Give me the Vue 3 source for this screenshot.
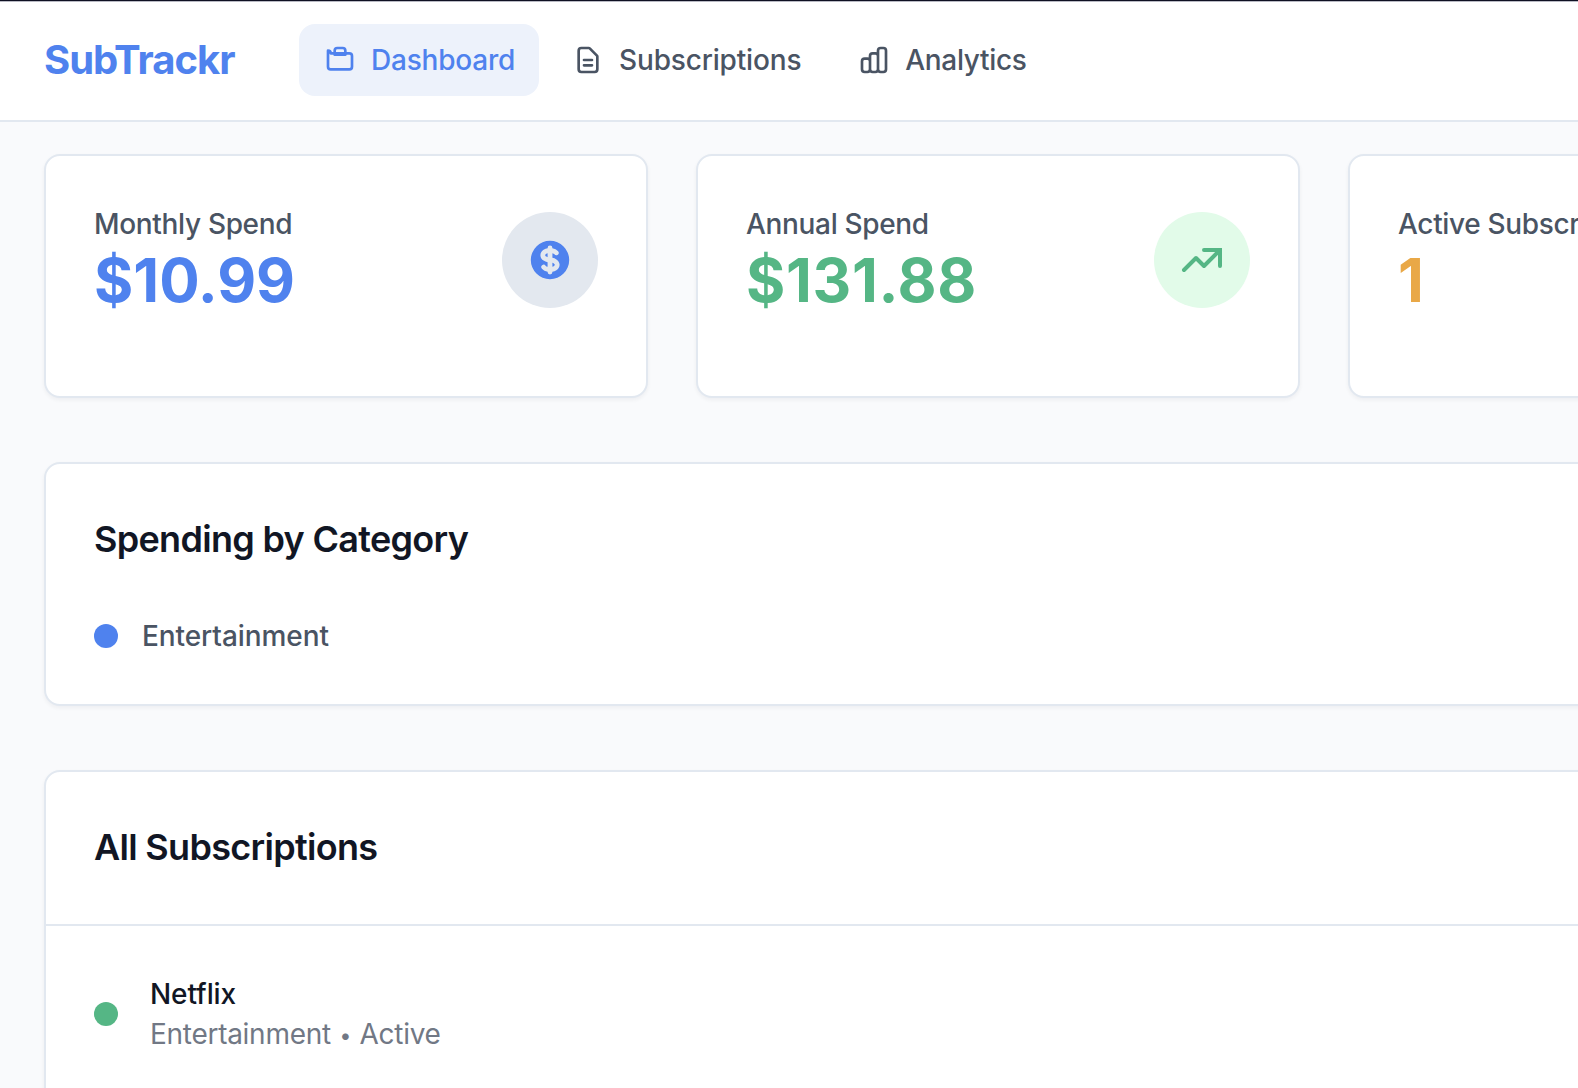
<script setup>
const nav = [
  {
    label: 'Dashboard',
    active: true,
    paths: [
      'M3 7v10a2 2 0 002 2h14a2 2 0 002-2V9a2 2 0 00-2-2H5a2 2 0 00-2-2z',
      'M8 5a2 2 0 012-2h4a2 2 0 012 2v3H8V5z',
    ],
  },
  {
    label: 'Subscriptions',
    paths: [
      'M9 12h6m-6 4h6m2 5H7a2 2 0 01-2-2V5a2 2 0 012-2h5.586a1 1 0 01.707.293l5.414 5.414a1 1 0 01.293.707V19a2 2 0 01-2 2z',
    ],
  },
  {
    label: 'Analytics',
    paths: [
      'M9 19v-6a2 2 0 00-2-2H5a2 2 0 00-2 2v6a2 2 0 002 2h2a2 2 0 002-2zm0 0V9a2 2 0 012-2h2a2 2 0 012 2v10m-6 0a2 2 0 002 2h2a2 2 0 002-2m0 0V5a2 2 0 012-2h2a2 2 0 012 2v14a2 2 0 01-2 2h-2a2 2 0 01-2-2z',
    ],
  },
]

const stats = [
  { label: 'Monthly Spend', value: '$10.99', tone: 'blue', icon: 'dollar' },
  { label: 'Annual Spend', value: '$131.88', tone: 'green', icon: 'trend' },
  { label: 'Active Subscriptions', value: '1', tone: 'amber' },
]
</script>

<template>
  <div class="page">
    <header class="header">
      <div class="brand">SubTrackr</div>
      <nav class="nav">
        <a v-for="item in nav" :key="item.label" class="nav-item" :class="[item.label.toLowerCase(), { active: item.active }]">
          <svg class="nav-icon" viewBox="0 0 24 24" fill="none" stroke="currentColor" stroke-width="2" stroke-linecap="round" stroke-linejoin="round">
            <path v-for="d in item.paths" :key="d" :d="d" />
          </svg>
          <span class="nav-label">{{ item.label }}</span>
        </a>
      </nav>
    </header>

    <main class="main">
      <section class="stats">
        <article v-for="s in stats" :key="s.label" class="card stat" :class="s.tone">
          <div class="stat-text">
            <div class="stat-label">{{ s.label }}</div>
            <div class="stat-value">{{ s.value }}</div>
          </div>
          <div v-if="s.icon" class="badge">
            <svg v-if="s.icon === 'dollar'" viewBox="0 0 20 20" fill="currentColor">
              <path d="M8.433 7.418c.155-.103.346-.196.567-.267v1.698a2.305 2.305 0 01-.567-.267C8.07 8.34 8 8.114 8 8c0-.114.07-.34.433-.582zM11 12.849v-1.698c.22.071.412.164.567.267.364.243.433.468.433.582 0 .114-.07.34-.433.582a2.305 2.305 0 01-.567.267z" />
              <path fill-rule="evenodd" clip-rule="evenodd" d="M10 18a8 8 0 100-16 8 8 0 000 16zm1-13a1 1 0 10-2 0v.092a4.535 4.535 0 00-1.676.662C6.602 6.234 6 7.009 6 8c0 .99.602 1.765 1.324 2.246.48.32 1.054.545 1.676.662v1.941c-.391-.127-.68-.317-.843-.504a1 1 0 10-1.51 1.31c.562.649 1.413 1.076 2.353 1.253V15a1 1 0 102 0v-.092a4.535 4.535 0 001.676-.662C13.398 13.766 14 12.991 14 12c0-.99-.602-1.765-1.324-2.246A4.535 4.535 0 0011 9.092V7.151c.391.127.68.317.843.504a1 1 0 101.511-1.31c-.563-.649-1.413-1.076-2.354-1.253V5z" />
            </svg>
            <svg v-else viewBox="0 0 24 24" fill="none" stroke="currentColor" stroke-width="2" stroke-linecap="round">
              <path d="M13 7h8v8" stroke-linejoin="miter" />
              <path d="M21 7l-8 8-4-4-6 6" stroke-linejoin="round" />
            </svg>
          </div>
        </article>
      </section>

      <section class="card category">
        <h2 class="title">Spending by Category</h2>
        <div class="category-row">
          <span class="dot blue-dot"></span>
          <span class="category-name">Entertainment</span>
        </div>
      </section>

      <section class="card list">
        <div class="list-head"><h2 class="title">All Subscriptions</h2></div>
        <div class="list-row">
          <span class="dot green-dot"></span>
          <div>
            <div class="sub-name">Netflix</div>
            <div class="sub-meta">Entertainment <span class="bullet">•</span> Active</div>
          </div>
        </div>
      </section>
    </main>
  </div>
</template>

<style>
body {
  margin: 0;
  overflow: hidden;
}
</style>

<style scoped>
.page {
  box-sizing: border-box;
  width: 1578px;
  height: 1088px;
  overflow: hidden;
  background: #f9fafc;
  font-family: Inter, 'Liberation Sans', sans-serif;
  font-size: 28px;
  line-height: 40px;
  font-weight: 500;
  color: #4a5463;
  white-space: nowrap;
}
.header {
  box-sizing: border-box;
  height: 122px;
  padding: 0 44px 2px;
  display: flex;
  align-items: center;
  border-top: 1px solid #0f1023;
  border-bottom: 2px solid #e2e8f0;
  background: #fff;
  box-shadow: inset 0 1px 0 #b9bac4;
}
.brand {
  width: 191px;
  margin-right: 64px;
  font-size: 40px;
  line-height: 56px;
  font-weight: 700;
  letter-spacing: -1.02px;
  color: #4f82ee;
}
.nav {
  display: flex;
  gap: 8px;
}
.nav-item {
  height: 72px;
  padding: 0 24px 0 25px;
  display: flex;
  align-items: center;
  gap: 15px;
  border-radius: 16px;
  letter-spacing: -0.22px;
}
.nav-item.subscriptions {
  letter-spacing: -0.17px;
}
.nav-item.analytics {
  letter-spacing: -0.34px;
}
.nav-item.active {
  background: #edf2fb;
  color: #4f82ee;
}
.nav-icon {
  width: 32px;
  height: 32px;
}
.card {
  box-sizing: border-box;
  border: 2px solid #e2e8f0;
  border-radius: 16px;
  background: #fff;
  box-shadow: 0 2px 4px rgba(15, 23, 42, 0.05);
}
.main {
  padding: 32px 0 0 44px;
  display: flex;
  flex-direction: column;
  gap: 64px;
}
.stats {
  display: grid;
  grid-template-columns: repeat(3, 604px);
  gap: 48px;
}
.stat {
  height: 244px;
  padding: 48px;
  display: flex;
  justify-content: space-between;
}
.stat-label {
  letter-spacing: -0.33px;
}
.stat-value {
  font-size: 60px;
  line-height: 72px;
  font-weight: 700;
}
.green .stat-value {
  letter-spacing: 0.7px;
}
.blue .stat-value,
.blue .badge {
  color: #4f82ee;
}
.green .stat-value,
.green .badge {
  color: #55b685;
}
.amber .stat-value {
  color: #e9a847;
}
.badge {
  width: 96px;
  height: 96px;
  margin-top: 8px;
  display: flex;
  align-items: center;
  justify-content: center;
  border-radius: 50%;
  background: #e3e8ef;
}
.green .badge {
  background: #e2fbe9;
}
.badge svg {
  width: 48px;
  height: 48px;
}
.category {
  width: 1900px;
  height: 244px;
  padding: 48px;
}
.title {
  margin: 0;
  padding-bottom: 2px;
  font-size: 36px;
  line-height: 54px;
  font-weight: 600;
  letter-spacing: -0.69px;
  color: #111624;
}
.category-row {
  margin-top: 48px;
  display: flex;
  align-items: center;
  gap: 24px;
}
.category-name {
  letter-spacing: -0.08px;
}
.dot {
  width: 24px;
  height: 24px;
  flex: none;
  border-radius: 50%;
}
.blue-dot {
  background: #4f82ee;
}
.green-dot {
  background: #55b685;
}
.list {
  width: 1900px;
  height: 420px;
}
.list-head {
  padding: 48px;
  border-bottom: 2px solid #e2e8f0;
}
.list-row {
  padding: 48px;
  display: flex;
  align-items: center;
  gap: 32px;
}
.sub-name {
  letter-spacing: -0.1px;
  color: #111624;
}
.sub-meta {
  font-weight: 400;
  letter-spacing: -0.28px;
  color: #717885;
}
.bullet {
  margin: 0 1px;
  font-size: 21px;
  line-height: 1;
  vertical-align: 1px;
}
</style>
